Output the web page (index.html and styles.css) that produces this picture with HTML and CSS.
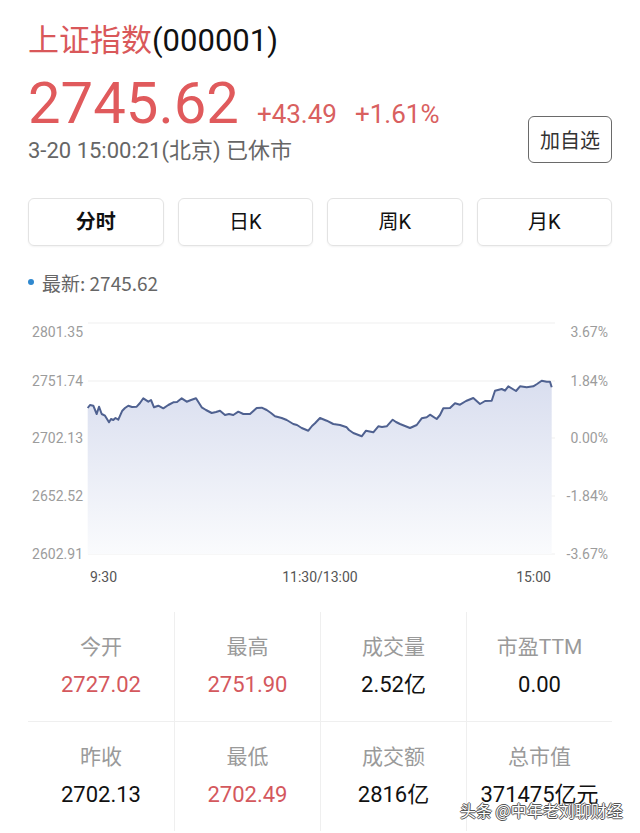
FILE: index.html
```html
<!DOCTYPE html>
<html lang="zh-CN">
<head>
  <meta charset="UTF-8">
  <title>上证指数(000001)</title>
  <link rel="stylesheet" href="styles.css">
</head>
<body>
<div class="page">
  <h1 class="title"><span class="title-name">上证指数</span>(000001)</h1>

  <div class="quote">
    <div class="quote-main">
      <div class="price-row">
        <span class="price">2745.62</span>
        <span class="change">+43.49</span>
        <span class="change">+1.61%</span>
      </div>
      <div class="quote-time">3-20 15:00:21(北京) 已休市</div>
    </div>
    <button class="add-btn">加自选</button>
  </div>

  <ul class="tabs">
    <li class="tab tab-active">分时</li>
    <li class="tab">日K</li>
    <li class="tab">周K</li>
    <li class="tab">月K</li>
  </ul>

  <div class="latest"><i class="latest-dot"></i>最新: 2745.62</div>

  <svg class="chart" width="584" height="276" viewBox="0 0 584 276">
    <defs>
      <linearGradient id="areaFill" x1="0" y1="0" x2="0" y2="1">
        <stop offset="0" stop-color="#d9deef"/>
        <stop offset="1" stop-color="#fafbfd"/>
      </linearGradient>
    </defs>
    <g class="grid">
      <line x1="60" y1="10" x2="527" y2="10"/>
      <line x1="60" y1="68" x2="527" y2="68"/>
      <line x1="60" y1="125" x2="527" y2="125"/>
      <line x1="60" y1="183" x2="527" y2="183"/>
      <line x1="60" y1="241" x2="527" y2="241"/>
    </g>
    <path class="area" d="M59.7,95 L62,92 65.3,92.7 68.7,101 71,93.7 73.7,101 77,102.7 81,109.3 83,106 85.3,107 87.5,105 90.3,106.7 94.3,97.7 97,95 100.3,92.7 104,94 108.7,93.7 112,90 115.3,85.3 120.3,88.7 123,87 126,94.3 130.3,92.7 135.3,95.3 140.3,92 145.3,89.3 149,89 153.7,85.3 158.7,88.7 163,87 168,85.3 173.7,94.3 178,97 183.7,100 188,99 192,97.7 197,102 201,101 205.3,102 210.3,98.7 215.3,101 222,101 228.7,95 233.7,94.7 238.7,97 243,100 247,103.3 253.7,105 258.7,107 265.3,111 269,112 273.7,115 280.3,117.7 284,113 287,110.3 292,105 298.7,107.7 305.3,111 312,112 318.7,114.3 321,117 325.3,120 333.7,123.3 338,117.7 345.3,119.3 350.3,113.3 354,114 358.7,113.3 364.7,106.7 368,109 372,111 377,113 382,115 388.7,112 393.7,105.3 398.7,104.3 402,101.7 408.7,106 412,102 415.3,95.3 422,95 427,90.3 432,91.7 438,88 445.3,85 452,91 457,88 463.7,87.7 467,77.7 473.7,76 477,77.7 480.3,73.3 488,78 492,73.3 498.7,74.3 505.3,73.3 509,71 513.7,67.7 518.7,68.7 522,68.7 523.7,74.3 L523.7,241 L59.7,241 Z"/>
    <polyline class="line" points="59.7,95 62,92 65.3,92.7 68.7,101 71,93.7 73.7,101 77,102.7 81,109.3 83,106 85.3,107 87.5,105 90.3,106.7 94.3,97.7 97,95 100.3,92.7 104,94 108.7,93.7 112,90 115.3,85.3 120.3,88.7 123,87 126,94.3 130.3,92.7 135.3,95.3 140.3,92 145.3,89.3 149,89 153.7,85.3 158.7,88.7 163,87 168,85.3 173.7,94.3 178,97 183.7,100 188,99 192,97.7 197,102 201,101 205.3,102 210.3,98.7 215.3,101 222,101 228.7,95 233.7,94.7 238.7,97 243,100 247,103.3 253.7,105 258.7,107 265.3,111 269,112 273.7,115 280.3,117.7 284,113 287,110.3 292,105 298.7,107.7 305.3,111 312,112 318.7,114.3 321,117 325.3,120 333.7,123.3 338,117.7 345.3,119.3 350.3,113.3 354,114 358.7,113.3 364.7,106.7 368,109 372,111 377,113 382,115 388.7,112 393.7,105.3 398.7,104.3 402,101.7 408.7,106 412,102 415.3,95.3 422,95 427,90.3 432,91.7 438,88 445.3,85 452,91 457,88 463.7,87.7 467,77.7 473.7,76 477,77.7 480.3,73.3 488,78 492,73.3 498.7,74.3 505.3,73.3 509,71 513.7,67.7 518.7,68.7 522,68.7 523.7,74.3"/>
    <g class="axis-y" text-anchor="end">
      <text x="55" y="24">2801.35</text>
      <text x="55" y="73">2751.74</text>
      <text x="55" y="130">2702.13</text>
      <text x="55" y="188">2652.52</text>
      <text x="55" y="246">2602.91</text>
      <text x="580" y="24">3.67%</text>
      <text x="580" y="73">1.84%</text>
      <text x="580" y="130">0.00%</text>
      <text x="580" y="188">-1.84%</text>
      <text x="580" y="246">-3.67%</text>
    </g>
    <g class="axis-x">
      <text x="62" y="269">9:30</text>
      <text x="292" y="269" text-anchor="middle">11:30/13:00</text>
      <text x="523" y="269" text-anchor="end">15:00</text>
    </g>
  </svg>

  <div class="stats">
    <div class="stat stat-top">
      <p class="stat-label">今开</p>
      <p class="stat-value up">2727.02</p>
    </div>
    <div class="stat stat-top">
      <p class="stat-label">最高</p>
      <p class="stat-value up">2751.90</p>
    </div>
    <div class="stat stat-top">
      <p class="stat-label">成交量</p>
      <p class="stat-value">2.52亿</p>
    </div>
    <div class="stat stat-top">
      <p class="stat-label">市盈TTM</p>
      <p class="stat-value">0.00</p>
    </div>
    <div class="stat">
      <p class="stat-label">昨收</p>
      <p class="stat-value">2702.13</p>
    </div>
    <div class="stat">
      <p class="stat-label">最低</p>
      <p class="stat-value up">2702.49</p>
    </div>
    <div class="stat">
      <p class="stat-label">成交额</p>
      <p class="stat-value">2816亿</p>
    </div>
    <div class="stat">
      <p class="stat-label">总市值</p>
      <p class="stat-value">371475亿元</p>
    </div>
  </div>
</div>

<div class="watermark">头条 @中年老刘聊财经</div>
</body>
</html>
```

FILE: styles.css
```css
html, body, div, ul, li, p, h1 {padding:0; margin:0;}
ul {list-style:none;}

body {background:#fff; color:#111; font-family:Roboto, "Noto Sans CJK SC", sans-serif;}

.page {padding:0 28px;}

.title {padding-top:21px; font-size:31px; line-height:40px; font-weight:normal; color:#111;}
.title-name {color:#d9585a;}

.quote {display:flex; justify-content:space-between;}
.price-row {display:flex; align-items:baseline; margin-top:12px; height:60px; line-height:60px; color:#e05a5c;}
.price {font-size:58px; margin-right:18px;}
.change {font-size:26px; margin-right:18px; color:#d9605f;}
.quote-time {margin-top:4px; font-size:22px; line-height:28px; color:#666;}
.add-btn {align-self:flex-end; width:84px; height:47px; margin-bottom:2px; padding:0; font-family:Roboto, "Noto Sans CJK SC", sans-serif;
          font-size:20px; color:#333; background:#fff; border:1.5px solid #6a6a6a; border-radius:6px;}

.tabs {display:grid; grid-template-columns:repeat(4, 1fr); gap:14px; margin-top:33px;}
.tab {height:46px; line-height:46px; text-align:center; font-size:20px; color:#111;
      border:1px solid #e3e3e3; border-radius:6px; box-shadow:0 1px 2px rgba(0, 0, 0, 0.05);}
.tab-active {font-weight:bold;}

.latest {display:flex; align-items:center; margin-top:24px; height:24px; font-family:"Noto Sans CJK SC", sans-serif;
         font-size:19px; color:#666;}
.latest-dot {width:6px; height:6px; margin-right:8px; border-radius:50%; background:#2f88cf;}

.chart {display:block; margin-top:19px;}
.chart .grid line {stroke:#efefef; stroke-width:1;}
.chart .area {fill:url(#areaFill);}
.chart .line {fill:none; stroke:#4f6190; stroke-width:2; stroke-linejoin:round;}
.chart .axis-y text {font-size:14px; fill:#9c9c9c;}
.chart .axis-x text {font-size:14px; fill:#555;}

.stats {display:grid; grid-template-columns:repeat(4, 1fr); margin-top:23px;}
.stat {padding:22px 0 21px; text-align:center; border-left:1px solid #efefef;}
.stat:nth-child(4n+1) {border-left:0;}
.stat-top {border-bottom:1px solid #efefef;}
.stat-label {font-size:21px; line-height:26px; color:#9a9a9a;}
.stat-value {margin-top:10px; font-size:22px; line-height:30px; color:#111;}
.stat-value.up {color:#d4585d;}

.watermark {position:absolute; left:460px; top:798px; font-family:"Noto Sans CJK SC", sans-serif; font-size:16px; color:#fff;
            text-shadow:1px 0 #555, -1px 0 #555, 0 1px #555, 0 -1px #555;}
```
